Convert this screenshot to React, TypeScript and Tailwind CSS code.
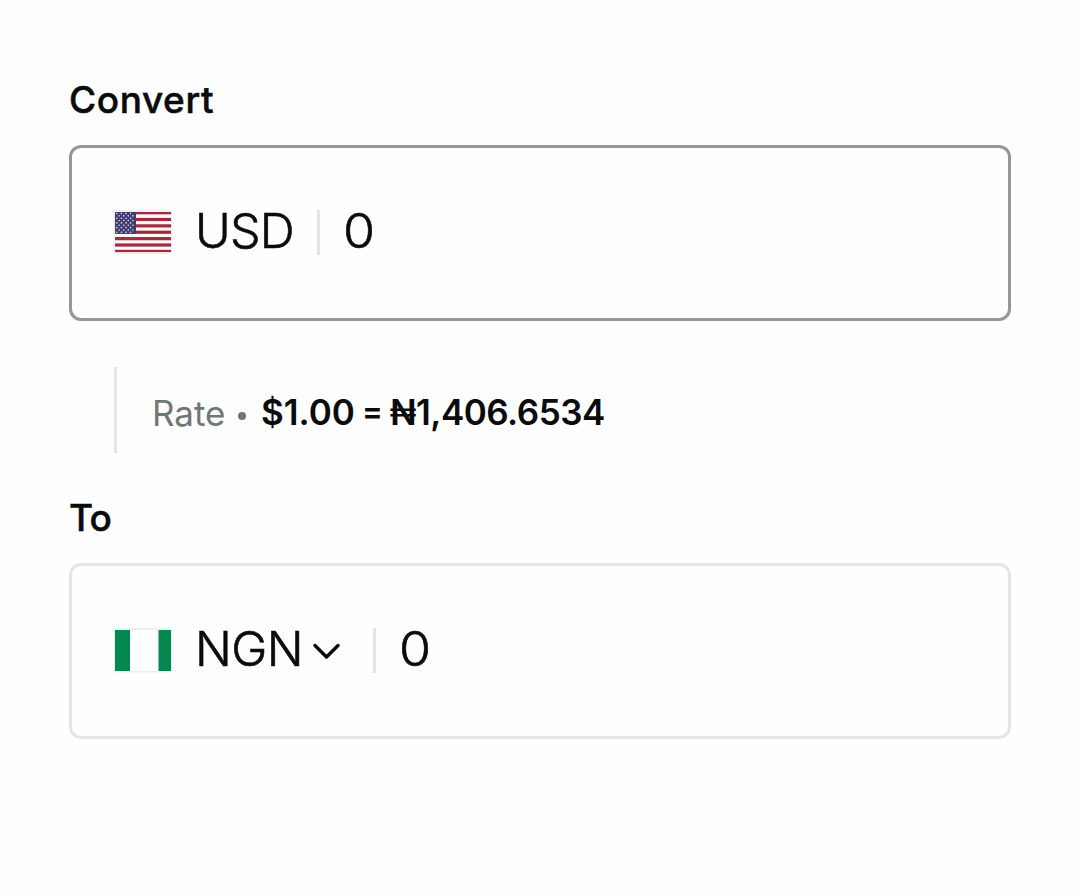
import type { ReactNode } from "react";

const STRIPES = [0, 2, 4, 6, 8, 10, 12];
const STAR_ROWS = [0, 1, 2, 3, 4, 5, 6, 7, 8];

function UsFlag() {
  const stripe = 41.5 / 13;
  return (
    <svg width="60" height="45" viewBox="0 0 60 45" className="block shrink-0">
      <rect x="0.5" y="0" width="58.5" height="44.5" rx="1" fill="#faeef0" />
      <rect x="2" y="2" width="56" height="41" fill="#fdf8fa" />
      {STRIPES.map((i) => (
        <rect
          key={i}
          x="2"
          y={i ? 1.5 + i * stripe : 2}
          width="56"
          height={i === 0 || i === 12 ? 2.3 : stripe}
          fill="#a02c40"
        />
      ))}
      <rect x="2" y="2" width="21" height="21.8" fill="#3f3d70" />
      {STAR_ROWS.map((row) =>
        [0, 1, 2, 3].map((col) => (
          <circle
            key={`${row}-${col}`}
            cx={3.8 + col * 4.6 + (row % 2 ? 2.3 : 0)}
            cy={3.5 + row * 2.35}
            r="0.8"
            fill="#e6e6f2"
          />
        ))
      )}
    </svg>
  );
}

function NigeriaFlag() {
  return (
    <svg width="60" height="45" viewBox="0 0 60 45" className="block shrink-0">
      <rect x="0.5" y="0" width="58.5" height="44.5" rx="1" fill="#edf2f0" />
      <rect x="2" y="2" width="56" height="41" fill="#ffffff" />
      <rect x="2" y="2" width="15" height="41" fill="#048852" />
      <rect x="45.5" y="2" width="12.5" height="41" fill="#048852" />
    </svg>
  );
}

function ChevronDown() {
  return (
    <svg width="30" height="20" viewBox="0 0 30 20" fill="none" className="mt-[13px] ml-[10px] block shrink-0">
      <path
        d="M4 4.5L15.5 16L27 4.5"
        stroke="#0a0b0d"
        strokeWidth="3.5"
        strokeLinecap="round"
        strokeLinejoin="round"
      />
    </svg>
  );
}

function Label({ children }: { children: ReactNode }) {
  return (
    <div className="h-10 text-[37px] leading-10 font-medium [-webkit-text-stroke:0.5px_#0a0b0d]">{children}</div>
  );
}

export default function App() {
  return (
    <div className="h-[893px] w-[1080px] bg-[#fefefe] px-[69px] pt-20 font-['Inter',sans-serif] text-[#0a0b0d]">
      <Label>
        <span className="tracking-[0.6px]">Convert</span>
      </Label>
      <div className="mt-[25px] flex h-44 items-start rounded-xl border-3 border-[#959696] pt-[62px] pl-[41px]">
        <UsFlag />
        <div className="ml-[22px] w-[98px] text-[48.5px] leading-[42px] font-light tracking-[-0.8px] whitespace-nowrap [-webkit-text-stroke:0.6px_#0a0b0d]">
          USD
        </div>
        <div className="ml-6 h-[45px] w-[3px] bg-[#e3e4e4]"></div>
        <div className="ml-[23px] origin-left scale-x-107 text-[48.5px] leading-[41px] font-light [-webkit-text-stroke:0.6px_#0a0b0d]">
          0
        </div>
      </div>

      <div className="mt-[46px] ml-[45px] flex h-[86px] items-start border-l-3 border-[#e5e7e7] pt-[25px] pl-[35px] whitespace-nowrap">
        <div className="w-[73px] text-[35px] leading-[42px] font-normal text-[#707877]">Rate</div>
        <div className="mt-5 ml-[13px] size-2 rounded-full bg-[#707877]"></div>
        <div className="ml-[15px] flex text-[35px] leading-10 font-semibold">
          <div>$1.00</div>
          <div className="ml-[7px] text-[31px] leading-[37px]">=</div>
          <div className="ml-[7px] tracking-[-0.5px]">₦1,406.6534</div>
        </div>
      </div>

      <div className="mt-[45px]">
        <Label>
          <span className="tracking-[-0.8px]">To</span>
        </Label>
      </div>
      <div className="mt-[25px] flex h-44 items-start rounded-xl border-3 border-[#e4e5e6] pt-[62px] pl-[41px]">
        <NigeriaFlag />
        <div className="ml-[22px] w-[106px] text-[48.5px] leading-[42px] font-light tracking-[-0.6px] whitespace-nowrap [-webkit-text-stroke:0.6px_#0a0b0d]">
          NGN
        </div>
        <ChevronDown />
        <div className="ml-8 h-[45px] w-[3px] bg-[#e3e4e4]"></div>
        <div className="ml-[23px] origin-left scale-x-107 text-[48.5px] leading-[41px] font-light [-webkit-text-stroke:0.6px_#0a0b0d]">
          0
        </div>
      </div>
    </div>
  );
}
